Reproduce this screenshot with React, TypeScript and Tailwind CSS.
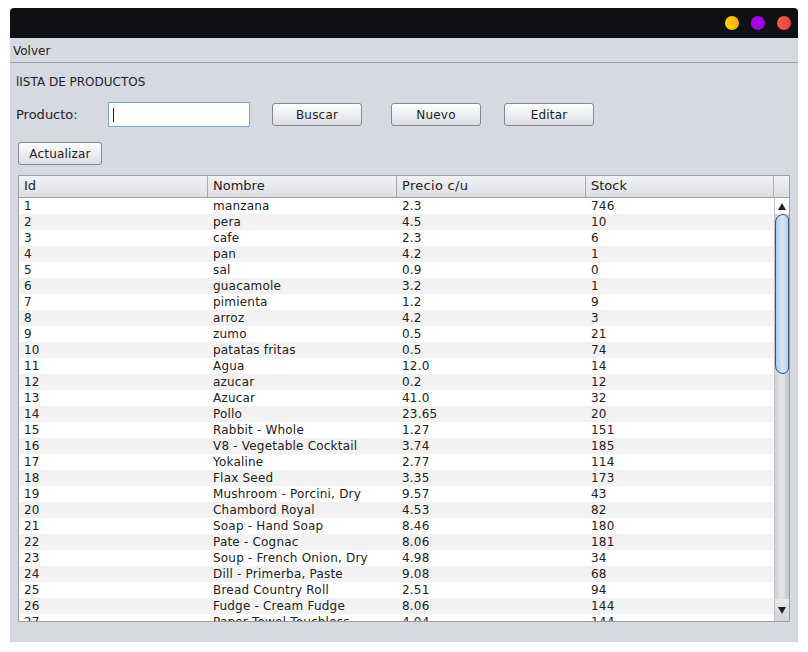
import React from "react";

const rows: [number, string, string, number][] = [
  [1, "manzana", "2.3", 746],
  [2, "pera", "4.5", 10],
  [3, "cafe", "2.3", 6],
  [4, "pan", "4.2", 1],
  [5, "sal", "0.9", 0],
  [6, "guacamole", "3.2", 1],
  [7, "pimienta", "1.2", 9],
  [8, "arroz", "4.2", 3],
  [9, "zumo", "0.5", 21],
  [10, "patatas fritas", "0.5", 74],
  [11, "Agua", "12.0", 14],
  [12, "azucar", "0.2", 12],
  [13, "Azucar", "41.0", 32],
  [14, "Pollo", "23.65", 20],
  [15, "Rabbit - Whole", "1.27", 151],
  [16, "V8 - Vegetable Cocktail", "3.74", 185],
  [17, "Yokaline", "2.77", 114],
  [18, "Flax Seed", "3.35", 173],
  [19, "Mushroom - Porcini, Dry", "9.57", 43],
  [20, "Chambord Royal", "4.53", 82],
  [21, "Soap - Hand Soap", "8.46", 180],
  [22, "Pate - Cognac", "8.06", 181],
  [23, "Soup - French Onion, Dry", "4.98", 34],
  [24, "Dill - Primerba, Paste", "9.08", 68],
  [25, "Bread Country Roll", "2.51", 94],
  [26, "Fudge - Cream Fudge", "8.06", 144],
  [27, "Paper Towel Touchless", "4.04", 144],
];

const Btn = ({ label, className = "" }: { label: string; className?: string }) => (
  <button
    className={`h-[23px] rounded-[3px] border border-[#85888d] bg-gradient-to-b from-[#fdfdfe] to-[#dcdee3] text-[12px] tracking-[0.2px] text-[#222] ${className}`}
  >
    {label}
  </button>
);

const App = () => {
  return (
    <div
      className="w-[808px] h-[652px] bg-white pt-[8px] pl-[10px]"
      style={{ fontFamily: '"DejaVu Sans", sans-serif' }}
    >
      <div className="w-[788px]">
        {/* title bar */}
        <div className="h-[30px] bg-[#0f1014] rounded-t-[4px] flex items-center justify-end pr-[7px] gap-[12px]">
          <span className="w-[14px] h-[14px] rounded-full bg-gradient-to-r from-[#ffd400] to-[#f2ae00]" />
          <span className="w-[14px] h-[14px] rounded-full bg-gradient-to-r from-[#b300f0] to-[#9a00e0]" />
          <span className="w-[14px] h-[14px] rounded-full bg-gradient-to-r from-[#ff5a4a] to-[#f03a3a]" />
        </div>

        {/* menu bar */}
        <div className="h-[25px] bg-[#d6d9df] border-b border-[#9c9ea3] flex items-center pl-[3px] pt-[1px] text-[12px] text-[#222]">
          Volver
        </div>

        {/* content */}
        <div className="h-[579px] bg-[#d6d9df] pl-[6px] pt-[11px] text-[12px] text-[#222]">
          <div className="h-[16px] leading-[16px]">lISTA DE PRODUCTOS</div>

          <div className="flex items-center mt-[12px] h-[25px]">
            <span className="w-[92px] text-[13px]">Producto:</span>
            <div className="w-[142px] h-[25px] bg-white border border-[#7ca3d3] rounded-[1px] flex items-center pl-[4px]">
              <span className="w-[1px] h-[14px] bg-[#222]" />
            </div>
            <Btn label="Buscar" className="w-[90px] ml-[22px]" />
            <Btn label="Nuevo" className="w-[90px] ml-[29px]" />
            <Btn label="Editar" className="w-[90px] ml-[23px]" />
          </div>

          <div className="mt-[15px] pl-[2px]">
            <Btn label="Actualizar" className="w-[84px]" />
          </div>

          {/* table */}
          <div className="mt-[10px] ml-[2px] w-[772px] h-[447px] border border-[#9c9ea3] bg-white flex flex-col overflow-hidden">
            <div className="h-[22px] flex border-b border-[#9c9ea3] bg-gradient-to-b from-[#f1f2f4] to-[#dcdee2] text-[13px]">
              <div className="w-[189px] border-r border-[#a9abaf] pl-[5px] leading-[19px]">Id</div>
              <div className="w-[189px] border-r border-[#a9abaf] pl-[5px] leading-[19px]">Nombre</div>
              <div className="w-[189px] border-r border-[#a9abaf] pl-[5px] leading-[19px] tracking-[0.3px]">Precio c/u</div>
              <div className="w-[188px] border-r border-[#a9abaf] pl-[5px] leading-[19px]">Stock</div>
              <div className="flex-1" />
            </div>
            <div className="flex flex-1 overflow-hidden">
              <div className="w-[755px] overflow-hidden tracking-[0.2px]">
                {rows.map((r, i) => (
                  <div
                    key={r[0]}
                    className={`h-[16px] leading-[16px] flex ${i % 2 === 0 ? "bg-white" : "bg-[#f2f2f2]"}`}
                  >
                    <div className="w-[189px] pl-[5px]">{r[0]}</div>
                    <div className="w-[189px] pl-[5px]">{r[1]}</div>
                    <div className="w-[189px] pl-[5px]">{r[2]}</div>
                    <div className="w-[188px] pl-[5px]">{r[3]}</div>
                  </div>
                ))}
              </div>
              {/* scrollbar */}
              <div className="flex-1 flex flex-col bg-gradient-to-r from-[#d0d1d4] via-[#e6e7e9] to-[#c4c5c8] border-l border-[#c0c1c4]">
                <div className="h-[16px] flex items-center justify-center bg-white">
                  <svg width="8" height="7" viewBox="0 0 8 7">
                    <path d="M4 0 L8 7 L0 7 Z" fill="#222" />
                  </svg>
                </div>
                <div className="h-[160px] rounded-l-[8px] rounded-r-[6px] border border-[#3f526c] bg-gradient-to-r from-[#aecbea] via-[#d8e7f6] to-[#b9d2ec]" />
                <div className="flex-1" />
                <div className="h-[22px] flex items-center justify-center bg-gradient-to-b from-[#e9eaec] to-[#d2d3d6]">
                  <svg width="8" height="7" viewBox="0 0 8 7">
                    <path d="M0 0 L8 0 L4 7 Z" fill="#222" />
                  </svg>
                </div>
              </div>
            </div>
          </div>
        </div>
      </div>
    </div>
  );
};

export default App;
